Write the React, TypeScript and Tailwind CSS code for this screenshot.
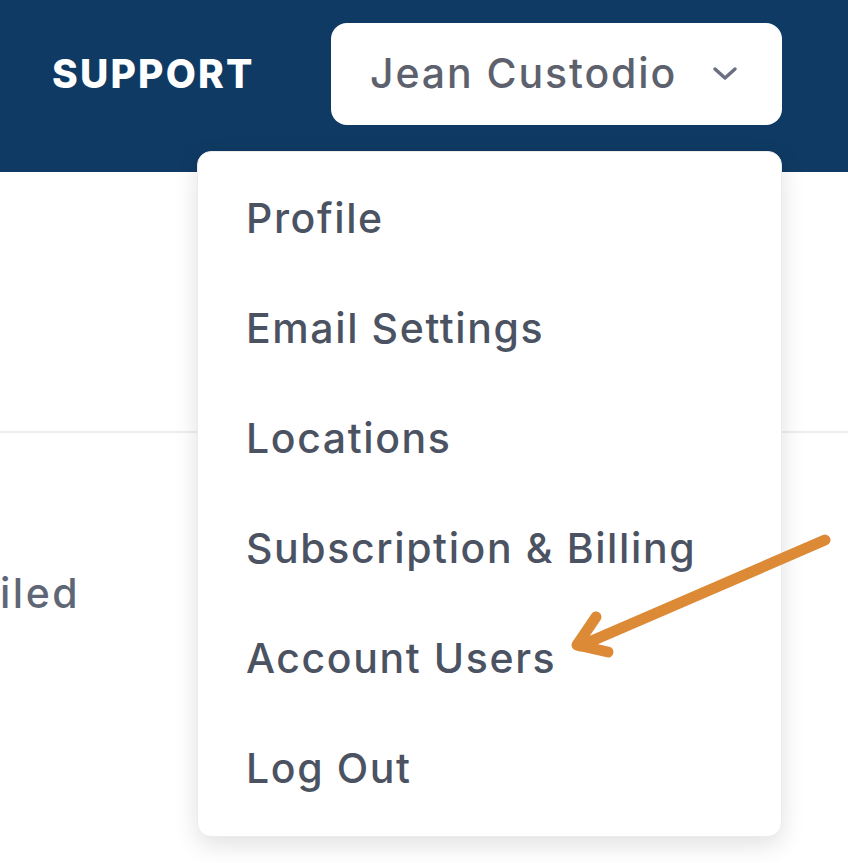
import React from "react";

const items = ["Profile", "Email Settings", "Locations", "Subscription & Billing", "Account Users", "Log Out"];

export default function App() {
  return (
    <div
      className="relative w-[848px] h-[863px] overflow-hidden bg-white"
      style={{ fontFamily: "Inter, 'Noto Sans', sans-serif" }}
    >
      <header className="h-[172px] bg-[#0f3a63] flex items-start pt-[23px] pl-[52px]">
        <div className="w-[200px] h-[102px] flex items-center text-white font-extrabold text-[39px] tracking-[2.2px]">SUPPORT</div>
        <button className="ml-[79px] w-[451px] h-[102px] rounded-[16px] bg-white flex items-center pl-[39px] pr-[44px]">
          <span className="text-[#5d616d] font-medium text-[41px] tracking-[1.9px]">Jean Custodio</span>
          <svg className="ml-auto" width="26" height="16" viewBox="0 0 26 16" fill="none">
            <path d="M3 3 L13 12 L23 3" stroke="#6b7080" strokeWidth="3.5" strokeLinecap="round" strokeLinejoin="round" />
          </svg>
        </button>
      </header>
      <div className="h-[261px] border-b-2 border-[#eeeeee]" />
      <div className="pt-[140px] text-[#5f6776] font-medium text-[41px] leading-none tracking-[2.5px]">iled</div>

      <div className="absolute left-[197px] top-[151px] w-[585px] rounded-[14px] bg-white py-[12px] shadow-[0_8px_24px_rgba(0,0,0,0.12)] border border-[#ececec]">
        {items.map((t) => (
          <div key={t} className="h-[110px] flex items-center pl-[48px] text-[#4b5262] font-medium text-[41px] tracking-[1.6px]">
            {t}
          </div>
        ))}
      </div>

      <svg className="absolute left-0 top-0" width="848" height="863" viewBox="0 0 848 863" fill="none">
        <path d="M825 540 L580 646" stroke="#dc8a36" strokeWidth="11" strokeLinecap="round" />
        <path d="M596 617 L577 645 L608 652" stroke="#dc8a36" strokeWidth="11" strokeLinecap="round" strokeLinejoin="round" />
      </svg>
    </div>
  );
}
